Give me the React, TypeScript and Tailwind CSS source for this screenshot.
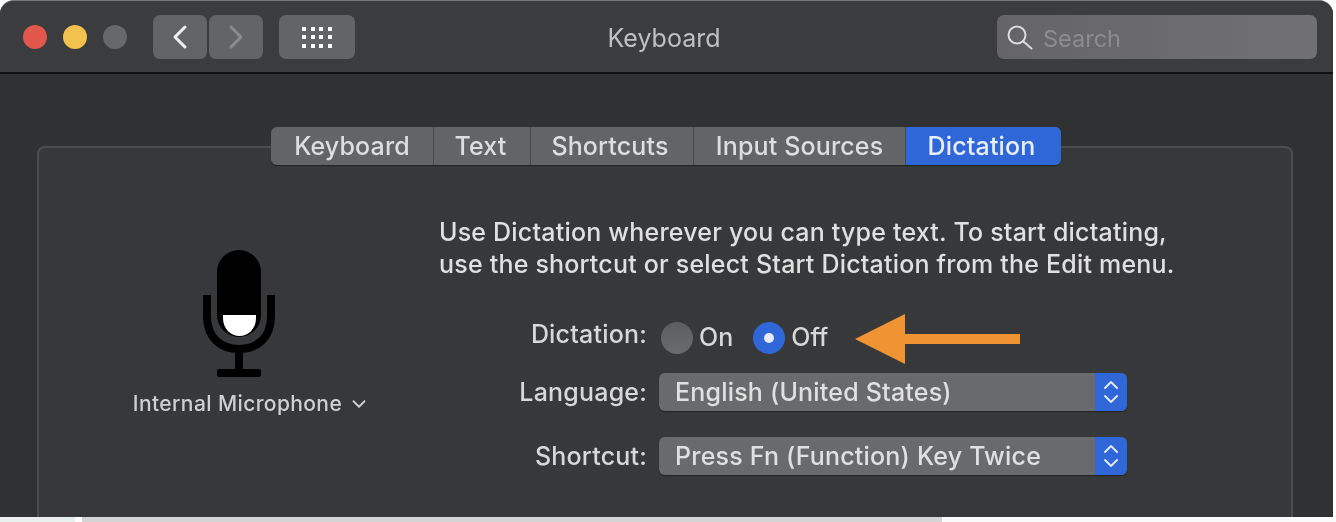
import React from 'react';
import { ChevronLeft, ChevronRight, ChevronDown, ChevronUp } from 'lucide-react';

const tabs = ['Keyboard', 'Text', 'Shortcuts', 'Input Sources', 'Dictation'];
const tabWidths = ['w-[163px]', 'w-[97px] pr-[3px]', 'w-[163px] pr-[4px]', 'w-[212px]', 'w-[155px] pr-[4px]'];

const MicIcon = () => (
  <svg width="72" height="128" viewBox="0 0 72 128">
    <rect x="14" y="0" width="44" height="87" rx="22" fill="#000" />
    <path d="M20 65 H53 V68 C53 79 45 86 36.500 86 C28 86 20 79 20 68 Z" fill="#fff" />
    <path d="M4 45 V66 C4 88 18 99 36 99 C54 99 68 88 68 66 V45" fill="none" stroke="#000" strokeWidth="8" />
    <rect x="32" y="100" width="8" height="20" fill="#000" />
    <rect x="14" y="119" width="44" height="8" rx="2" fill="#000" />
  </svg>
);

const SearchIcon = () => (
  <svg width="26" height="25" viewBox="0 0 26 25" fill="none" stroke="#dcdcdc" strokeWidth="2">
    <circle cx="10" cy="10" r="8.500" />
    <path d="M16.500 16.500 L24.500 23.500" strokeLinecap="round" />
  </svg>
);

const Stepper = () => (
  <div className="flex h-[38px] w-[32px] flex-col items-center justify-center rounded-r-[6px] bg-[#2f66d8] text-[#dfe8fb]">
    <ChevronUp size={24} strokeWidth={2} className="-mb-[5px]" />
    <ChevronDown size={24} strokeWidth={2} className="-mt-[5px]" />
  </div>
);

const Select = ({ value }: { value: string }) => (
  <div className="flex h-[38px] w-[468px] items-center rounded-[6px] bg-[#696a6c] shadow-[0_1px_1px_#222]">
    <span className="flex-1 pl-[16px] text-[25px] leading-[30px] tracking-[0.2px] text-[#e0e0e0]">{value}</span>
    <Stepper />
  </div>
);

const App = () => {
  return (
    <div className="h-[522px] w-[1336px] overflow-hidden bg-white font-['Inter',sans-serif] font-medium">
      <div className="flex h-[517px] w-[1333px] flex-col overflow-hidden rounded-t-[14px] border-t border-[#777] bg-[#303133] blur-[0.6px]">
        <div className="flex h-[73px] items-center border-b-2 border-[#111] bg-[#3b3c3e] pt-[1px]">
          <div className="ml-[23px] flex gap-[16px]">
            <div className="h-[24px] w-[24px] rounded-full bg-[#e2574c]" />
            <div className="h-[24px] w-[24px] rounded-full bg-[#f2c14e]" />
            <div className="h-[24px] w-[24px] rounded-full bg-[#67686a]" />
          </div>
          <div className="ml-[26px] flex gap-[2px]">
            <div className="flex h-[44px] w-[54px] items-center justify-center rounded-[7px] bg-[#636466] text-[#f0f0f0]">
              <ChevronLeft size={40} strokeWidth={1.8} />
            </div>
            <div className="flex h-[44px] w-[54px] items-center justify-center rounded-[7px] bg-[#636466] text-[#8a8b8d]">
              <ChevronRight size={40} strokeWidth={1.8} />
            </div>
          </div>
          <div className="ml-[16px] grid h-[44px] w-[76px] grid-cols-[repeat(4,4px)] content-center justify-center gap-[4.500px] rounded-[7px] bg-[#636466]">
            {Array.from({ length: 12 }).map((_, i) => (
              <div key={i} className="h-[4px] w-[4px] bg-white" />
            ))}
          </div>
          <div className="ml-[252px] w-[114px] pt-[4px] text-center text-[25px] font-normal text-[#c0c0c0]">Keyboard</div>
          <div className="ml-[276px] flex h-[44px] w-[320px] items-center rounded-[7px] bg-linear-to-r from-[#656567] to-[#717173] pl-[10px]">
            <SearchIcon />
            <span className="ml-[10px] pt-[4px] text-[23.500px] font-normal text-[#8d8d8f]">Search</span>
          </div>
        </div>
        <div className="relative mt-[72px] ml-[37px] w-[1256px] flex-1 rounded-t-[8px] border-2 border-b-0 border-[#4c4d4f] bg-[#37383a]">
          <div className="absolute -top-[21px] left-[232px] flex h-[38px] overflow-hidden rounded-[6px] bg-[#636466] text-[25px] tracking-[0.15px] text-[#dedede] shadow-[0_1px_1px_#222]">
            {tabs.map((tab, i) => (
              <div
                key={tab}
                className={`flex items-center justify-center border-r border-[#4a4b4d] pt-[1px] ${tabWidths[i]} ${
                  tab === 'Dictation' ? 'border-r-0 bg-[#2f66d8] text-[#e8eefc]' : ''
                }`}
              >
                {tab}
              </div>
            ))}
          </div>
          <div className="flex pt-[68px]">
            <div className="flex w-[399px] flex-col items-center pt-[34px]">
              <div className="ml-[1px]"><MicIcon /></div>
              <div className="mt-[10px] ml-[26px] flex items-center gap-[6px] text-[21px] tracking-[0.4px] text-[#d0d0d0]">
                Internal Microphone
                <ChevronDown size={22} strokeWidth={2} />
              </div>
            </div>
            <div className="flex-1 pl-[1px]">
              <p className="text-[25px] leading-[32px] tracking-[0.2px] text-[#e0e0e0]">
                Use Dictation wherever you can type text. To start dictating,
                <br />
                use the shortcut or select Start Dictation from the Edit menu.
              </p>
              <div className="mt-[39px] ml-[60px] flex flex-col">
                <div className="relative flex h-[38px] items-center">
                  <span className="w-[148px] -translate-y-[3px] text-right text-[25px] tracking-[0.2px] text-[#d8d8d8]">Dictation:</span>
                  <div className="ml-[14px] h-[32px] w-[32px] rounded-full bg-linear-to-b from-[#5c5d5f] to-[#6a6b6d]" />
                  <span className="ml-[6px] text-[25px] text-[#d8d8d8]">On</span>
                  <div className="ml-[20px] flex h-[32px] w-[32px] items-center justify-center rounded-full bg-[#2f66d8]">
                    <div className="h-[10px] w-[10px] rounded-full bg-[#e6ecfb]" />
                  </div>
                  <span className="ml-[6px] text-[25px] text-[#d8d8d8]">Off</span>
                  <svg className="absolute left-[356px] top-[-5px]" width="166" height="50" viewBox="0 0 166 50">
                    <path d="M0 25 L50 0 V20 H165 V30 H50 V50 Z" fill="#f09433" />
                  </svg>
                </div>
                <div className="mt-[16px] flex items-center">
                  <span className="w-[148px] text-right text-[25px] leading-[30px] tracking-[0.2px] text-[#d8d8d8]">Language:</span>
                  <div className="ml-[12px]"><Select value="English (United States)" /></div>
                </div>
                <div className="mt-[26px] flex items-center">
                  <span className="w-[148px] text-right text-[25px] leading-[30px] tracking-[0.2px] text-[#d8d8d8]">Shortcut:</span>
                  <div className="ml-[12px]"><Select value="Press Fn (Function) Key Twice" /></div>
                </div>
              </div>
            </div>
          </div>
        </div>
      </div>
      <div className="flex h-[5px] w-[1336px]">
        <div className="w-[75px] bg-[#e8f0ee]" />
        <div className="w-[7px] bg-white" />
        <div className="w-[860px] bg-[#d4d4d4]" />
        <div className="flex-1 bg-[#fafafa]" />
      </div>
    </div>
  );
};

export default App;
